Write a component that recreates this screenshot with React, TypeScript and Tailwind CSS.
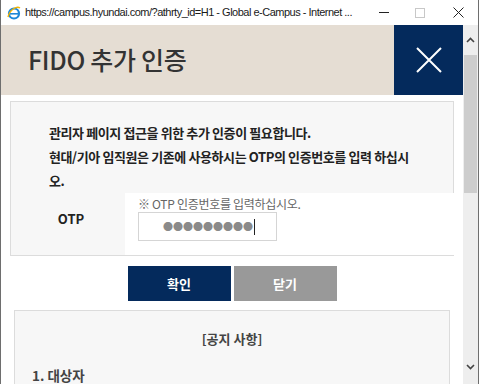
import React from 'react';

const KR = { fontFamily: '"Noto Sans CJK KR", "Noto Sans", sans-serif' };

const IeIcon: React.FC = () => (
  <svg width="14" height="14" viewBox="0 0 14 14">
    <circle cx="7" cy="7.5" r="5" fill="none" stroke="#1e88d8" strokeWidth="2.2" />
    <rect x="3" y="7" width="8" height="1.6" fill="#1e88d8" />
    <path d="M1 11 C 3 3, 10 0, 13 2" fill="none" stroke="#f4b400" strokeWidth="1.4" />
  </svg>
);

const TitleBar: React.FC = () => (
  <div className="h-[25px] bg-white flex items-center shrink-0">
    <div className="pl-[6px] pr-[4px] flex items-center shrink-0">
      <IeIcon />
    </div>
    <span
      className="text-[11px] tracking-[-0.5px] text-[#1a1a1a] whitespace-nowrap"
      style={{ fontFamily: '"Liberation Sans", Arial, sans-serif' }}
    >
      https://campus.hyundai.com/?athrty_id=H1 - Global e-Campus - Internet ...
    </span>
    <div className="ml-auto flex items-center shrink-0">
      <div className="w-[36px] flex justify-center">
        <div className="w-[10px] h-px bg-[#222]" />
      </div>
      <div className="w-[36px] flex justify-center">
        <div className="w-[10px] h-[10px] border border-[#c8c8c8]" />
      </div>
      <div className="w-[40px] flex justify-center">
        <svg width="11" height="11" viewBox="0 0 11 11">
          <path d="M0.5 0.5 L10.5 10.5 M10.5 0.5 L0.5 10.5" stroke="#222" strokeWidth="1" />
        </svg>
      </div>
    </div>
  </div>
);

const Scrollbar: React.FC = () => (
  <div className="w-[15px] bg-[#eeeeee] flex flex-col items-center shrink-0">
    <div className="h-[30px] flex items-center justify-center">
      <svg width="9" height="6" viewBox="0 0 9 6">
        <path d="M1 5 L4.5 1.5 L8 5" fill="none" stroke="#444" strokeWidth="1.6" />
      </svg>
    </div>
    <div className="w-[13px] h-[138px] bg-[#cdcdcd]" />
    <div className="flex-1" />
    <div className="h-[22px] flex items-start justify-center pt-[2px]">
      <svg width="9" height="6" viewBox="0 0 9 6">
        <path d="M1 1 L4.5 4.5 L8 1" fill="none" stroke="#444" strokeWidth="1.6" />
      </svg>
    </div>
  </div>
);

export default function App() {
  return (
    <div className="w-[479px] h-[384px] overflow-hidden flex flex-col bg-white border-l border-r border-[#6e6e6e]" style={KR}>
      <TitleBar />
      <div className="flex flex-1 min-h-0">
        <div className="flex-1 flex flex-col min-w-0">
          {/* header */}
          <div className="h-[70px] flex shrink-0">
            <div className="flex-1 bg-[#e5ddd3] flex items-center pl-[27px]">
              <h1 className="text-[25px] font-medium text-[#333] tracking-[-0.3px]">FIDO 추가 인증</h1>
            </div>
            <div className="w-[69px] bg-[#042a5c] flex items-center justify-center">
              <svg width="26" height="26" viewBox="0 0 26 26">
                <path d="M1 1 L25 25 M25 1 L1 25" stroke="#fff" strokeWidth="2" />
              </svg>
            </div>
          </div>

          <div className="px-[9px] pt-[6px] flex flex-col">
            {/* intro */}
            <div className="bg-[#f7f7f7] border-t border-l border-r border-[#dcdcdc] pl-[38px] pt-[19px] text-[13px] font-bold text-[#222] leading-[24px] tracking-[-0.4px]">
              <p>관리자 페이지 접근을 위한 추가 인증이 필요합니다.</p>
              <p>
                현대/기아 임직원은 기존에 사용하시는 OTP의 인증번호를 입력 하십시
                <br />
                오.
              </p>
            </div>

            {/* otp row */}
            <div className="flex h-[63px] border-b border-[#dcdcdc]">
              <div className="w-[115px] bg-[#f7f7f7] border-l border-[#dcdcdc] flex items-center justify-center pl-[6px] pb-[10px] text-[13px] font-bold text-[#222]">
                OTP
              </div>
              <div className="flex-1 bg-white pl-[13px] pt-[2px]">
                <p className="text-[12px] text-[#666] leading-[17px] tracking-[-0.3px]">※ OTP 인증번호를 입력하십시오.</p>
                <div className="w-[139px] h-[29px] border border-[#d5d5d5] flex items-center pl-[24px]">
                  <span className="text-[10px] text-[#8a8a8a]">●●●●●●●●●</span>
                  <span className="w-px h-[16px] bg-[#222] ml-px" />
                </div>
              </div>
            </div>

            {/* buttons */}
            <div className="flex justify-center gap-[3px] mt-[10px]">
              <button className="w-[103px] h-[35px] bg-[#042a5c] text-white text-[13px] font-bold">확인</button>
              <button className="w-[103px] h-[35px] bg-[#999999] text-white text-[13px] font-bold">닫기</button>
            </div>

            {/* notice */}
            <div className="mx-[4px] mt-[9px] bg-[#f7f7f7] border border-[#dcdcdc] h-[120px] pt-[18px]">
              <p className="text-center text-[13px] font-bold text-[#444] leading-[20px]">[공지 사항]</p>
              <p className="mt-[16px] pl-[17px] text-[13.5px] font-bold text-[#444] leading-[20px]">1. 대상자</p>
            </div>
          </div>
        </div>
        <Scrollbar />
      </div>
    </div>
  );
}
